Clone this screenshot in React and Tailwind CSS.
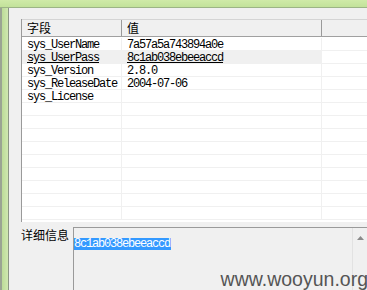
import React from "react";

const rows = [
  { k: "sys_UserName", v: "7a57a5a743894a0e" },
  { k: "sys_UserPass", v: "8c1ab038ebeeaccd", sel: true },
  { k: "sys_Version", v: "2.8.0" },
  { k: "sys_ReleaseDate", v: "2004-07-06" },
  { k: "sys_License", v: "" },
  ...Array.from({ length: 9 }, () => ({ k: "", v: "" })),
];

const mono = "font-['Liberation_Mono',monospace] text-[12px] tracking-[-1.2px] leading-[12px]";
const cjk = "font-['Noto_Sans_CJK_SC','Noto_Sans',sans-serif] text-[12px] leading-[14px]";

function App() {
  return (
    <div className="relative w-[367px] h-[290px] overflow-hidden bg-[#f0f0f0] flex flex-col">
      {/* top frame */}
      <div className="h-[8px] w-full bg-gradient-to-b from-[#cfeaa8] to-[#c2e29a] border-b border-[#9cb486] shrink-0" />
      <div className="flex flex-1 min-w-0">
        {/* left frame */}
        <div className="w-[2px] shrink-0 bg-[#9aa493]" />
        <div className="w-[6px] shrink-0 bg-gradient-to-r from-[#bcdc98] to-[#cfe8b0]" />
        <div className="w-[1px] shrink-0 bg-[#8a9682]" />
        <div className="flex-1 min-w-0 flex flex-col pl-[12px] pt-[11px]">
          {/* list view */}
          <div className="w-[400px] shrink-0 h-[203px] border-l border-[#9a9a9a] bg-white flex flex-col">
            <div className={`h-[18px] flex bg-[#f0f0f0] border-t border-[#d4d4d4] border-b border-b-[#a0a0a0] ${cjk} text-black`}>
              <div className="w-[100px] shrink-0 pl-[5px] pt-[1px] border-r border-[#9a9a9a]">字段</div>
              <div className="w-[200px] shrink-0 pl-[5px] pt-[1px] border-r border-[#9a9a9a]">值</div>
              <div className="flex-1" />
            </div>
            <div className="h-[1px]" />
            {rows.map((r, i) => (
              <div
                key={i}
                className={`h-[13px] flex border-b border-[#f0f0f0] ${mono} text-black ${r.sel ? "bg-[#f0f0f0]" : ""}`}
              >
                <div className={`w-[100px] shrink-0 pl-[5px] pt-[1px] border-r border-[#f0f0f0] ${r.sel ? "underline" : ""}`}>{r.k}</div>
                <div className={`w-[200px] shrink-0 pl-[5px] pt-[1px] border-r border-[#f0f0f0] ${r.sel ? "underline" : ""}`}>{r.v}</div>
                <div className="flex-1 bg-white" />
              </div>
            ))}
          </div>
          {/* detail */}
          <div className="flex mt-[5px]">
            <div className={`w-[52px] shrink-0 pt-[1px] ${cjk} text-black whitespace-nowrap`}>详细信息</div>
            <div className="flex-1 min-w-0 h-[80px] border-l border-t border-[#9a9a9a] bg-[#f0f0f0] flex">
              <div className="flex-1 pt-[1px]">
                <span className={`${mono} inline-block h-[12px] bg-[#3399ff] text-white pr-[1px]`}>8c1ab038ebeeaccd</span>
              </div>
              <div className="w-[15px] shrink-0 border-l border-[#e2e2e2] flex justify-center pt-[8px]">
                <svg width="7" height="4" viewBox="0 0 7 4">
                  <path d="M0 4 L3.5 0 L7 4 Z" fill="#8a8a8a" />
                </svg>
              </div>
            </div>
          </div>
        </div>
      </div>
      <div className="absolute right-[-1px] bottom-[1px] font-['Liberation_Sans',Arial,sans-serif] text-[19.5px] leading-[20px] text-[#555555]">
        www.wooyun.org
      </div>
    </div>
  );
}

export default App;
